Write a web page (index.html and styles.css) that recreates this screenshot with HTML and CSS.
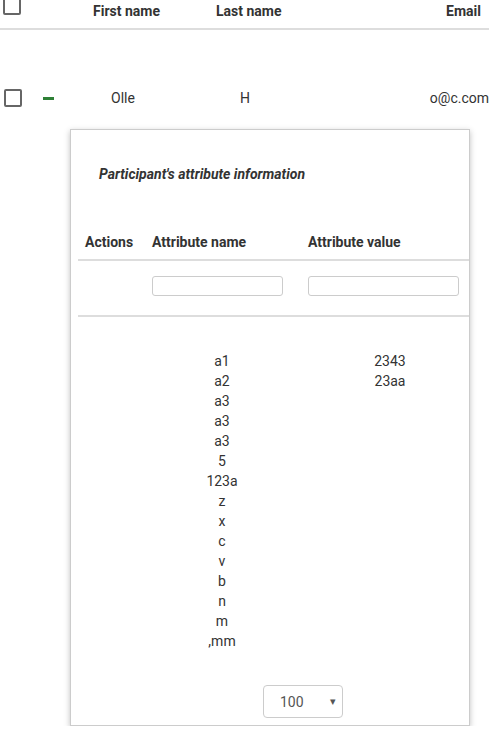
FILE: index.html
```html
<!DOCTYPE html>
<html>
<head>
<meta charset="utf-8">
<link rel="stylesheet" href="styles.css">
</head>
<body>
<div class="grid-head">
  <div class="c-check"><span class="checkbox head-box"></span></div>
  <div class="c-first">First name</div>
  <div class="c-last">Last name</div>
  <div class="c-email">Email</div>
</div>
<div class="grid-row">
  <div class="c-check"><span class="checkbox"></span></div>
  <div class="c-toggle"><span class="dash"></span></div>
  <div class="c-first-d">Olle</div>
  <div class="c-last-d">H</div>
  <div class="c-email-d">o@c.com</div>
</div>
<div class="card">
  <div class="card-title">Participant's attribute information</div>
  <div class="sub-table">
    <div class="sub-head">
      <div class="col-actions">Actions</div>
      <div class="col-name">Attribute name</div>
      <div class="col-value">Attribute value</div>
    </div>
    <div class="sub-filter">
      <div class="col-actions"></div>
      <div class="col-name"><input class="filter-in in-name" type="text"></div>
      <div class="col-value"><input class="filter-in in-value" type="text"></div>
    </div>
    <div class="sub-body">
      <div class="col-actions"></div>
      <div class="col-name list">
        <div>a1</div><div>a2</div><div>a3</div><div>a3</div><div>a3</div><div>5</div><div>123a</div><div>z</div><div>x</div><div>c</div><div>v</div><div>b</div><div>n</div><div>m</div><div>,mm</div>
      </div>
      <div class="col-value list">
        <div>2343</div><div>23aa</div>
      </div>
    </div>
  </div>
  <div class="pager">
    <div class="select-box"><span class="sel-text">100</span><span class="sel-arrow">&#9662;</span></div>
  </div>
</div>
</body>
</html>
```
FILE: styles.css
```css
html, body {
  margin: 0;
  padding: 0;
  background: #fff;
}
body {
  font-family: Roboto, "Liberation Sans", sans-serif;
  font-size: 14px;
  line-height: 20px;
  color: #333;
  width: 489px;
  overflow: hidden;
}
.grid-head {
  display: flex;
  border-bottom: 2px solid #ddd;
  font-weight: bold;
  padding-top: 1px;
  box-sizing: border-box;
  height: 30px;
}
.grid-head .c-check {
  width: 93px;
  padding-left: 3px;
  box-sizing: border-box;
}
.checkbox {
  display: block;
  width: 18px;
  height: 18px;
  border: 2px solid #666;
  border-radius: 2px;
  box-sizing: border-box;
}
.head-box {
  margin-top: -4px;
}
.c-first {
  width: 123px;
}
.c-last {
  flex: 1;
}
.c-email {
  padding-right: 8px;
}
.grid-row {
  display: flex;
  align-items: center;
  height: 36px;
  margin-top: 50px;
}
.grid-row .c-check {
  width: 36px;
  padding-left: 4px;
  box-sizing: border-box;
}
.c-toggle {
  width: 75px;
  padding-left: 7px;
  box-sizing: border-box;
}
.dash {
  display: block;
  width: 11px;
  height: 3px;
  background: #2e8036;
}
.c-first-d {
  width: 129px;
}
.c-last-d {
  flex: 1;
}
.c-email-d {
  text-align: right;
}
.card {
  margin: 13px 0 0 70px;
  width: 400px;
  border: 1px solid #ccc;
  box-sizing: border-box;
  box-shadow: 0 2px 6px rgba(0, 0, 0, 0.25);
  overflow: hidden;
  background: #fff;
  padding-bottom: 7px;
}
.card-title {
  padding: 34px 0 0 28px;
  font-weight: bold;
  font-style: italic;
}
.sub-table {
  margin-left: 7px;
  width: 402px;
  margin-top: 48px;
}
.sub-head, .sub-filter, .sub-body {
  display: grid;
  grid-template-columns: 66px 156px 180px;
}
.sub-head {
  font-weight: bold;
  padding-bottom: 7px;
  border-bottom: 2px solid #ddd;
}
.sub-head .col-actions {
  padding-left: 7px;
}
.sub-head .col-name, .sub-head .col-value,
.sub-filter .col-name, .sub-filter .col-value {
  padding-left: 8px;
}
.sub-filter {
  padding: 15px 0 19px;
  border-bottom: 2px solid #ddd;
}
.filter-in {
  display: block;
  height: 20px;
  border: 1px solid #ccc;
  border-radius: 3px;
  box-sizing: border-box;
  margin: 0;
  padding: 0 4px;
  background: #fff;
}
.in-name {
  width: 131px;
}
.in-value {
  width: 151px;
}
.sub-body {
  padding-top: 34px;
}
.list {
  text-align: center;
}
.pager {
  margin-top: 34px;
  padding-left: 192px;
}
.select-box {
  width: 80px;
  height: 33px;
  border: 1px solid #ccc;
  border-radius: 4px;
  box-sizing: border-box;
  display: flex;
  align-items: center;
  padding-left: 16px;
  color: #555;
}
.sel-text {
  flex: 1;
}
.sel-arrow {
  font-size: 11px;
  padding-right: 6px;
  color: #555;
}
```
